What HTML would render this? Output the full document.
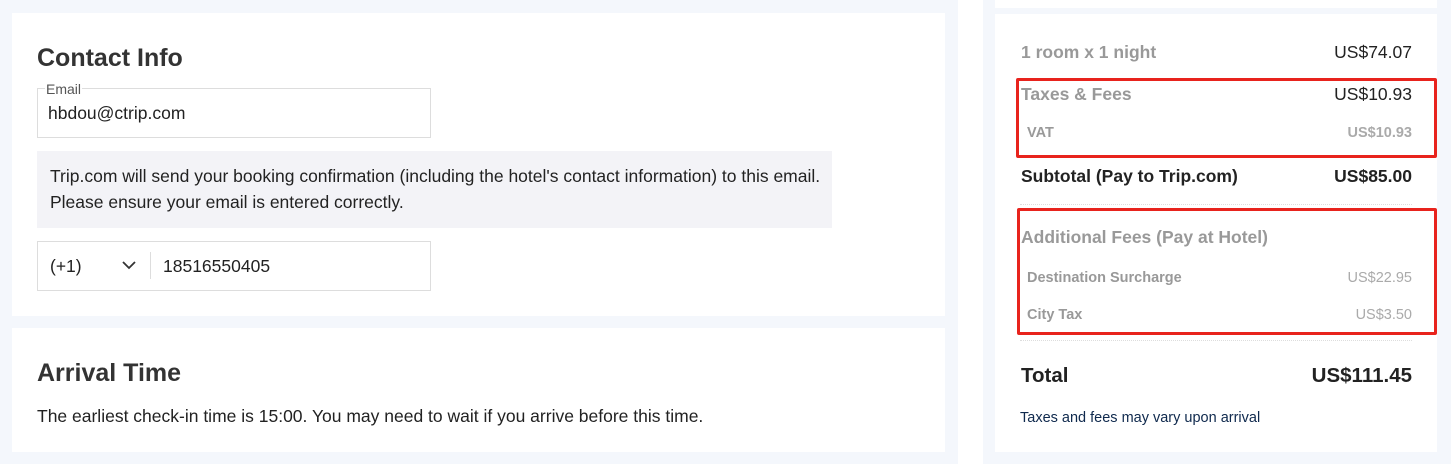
<!DOCTYPE html>
<html><head><style>
*{margin:0;padding:0;box-sizing:border-box}
body{width:1451px;height:464px;background:#f4f7fc;position:relative;overflow:hidden;font-family:"Liberation Sans",Arial,sans-serif;color:#0f294d}
.a{position:absolute}
.card{position:absolute;background:#fff}
h2{position:absolute;font-size:25px;font-weight:bold;color:#333}
.t{position:absolute;white-space:nowrap}
.r{position:absolute;white-space:nowrap;right:39px;text-align:right}
</style></head><body>
<div class="card" style="left:12px;top:13px;width:933px;height:303px"></div>
<div class="card" style="left:12px;top:328px;width:933px;height:124px"></div>
<div class="card" style="left:958px;top:0;width:25px;height:464px"></div>
<div class="card" style="left:995px;top:0;width:442px;height:8px"></div>
<div class="card" style="left:995px;top:14px;width:442px;height:438px"></div>

<h2 style="left:37px;top:44px">Contact Info</h2>
<div class="a" style="left:37px;top:88px;width:394px;height:50px;border:1px solid #ddd"></div>
<div class="t" style="left:45px;top:81px;font-size:14px;color:#555;background:#fff;padding:0 1px;line-height:16px">Email</div>
<div class="t" style="left:48px;top:103px;font-size:17.5px;color:#222">hbdou@ctrip.com</div>
<div class="a" style="left:37px;top:151px;width:795px;height:77px;background:#f3f3f7"></div>
<div class="t" style="left:50px;top:163px;font-size:17.5px;color:#222;line-height:26px">Trip.com will send your booking confirmation (including the hotel's contact information) to this email.<br>Please ensure your email is entered correctly.</div>
<div class="a" style="left:37px;top:241px;width:394px;height:50px;border:1px solid #ddd"></div>
<div class="t" style="left:50px;top:256px;font-size:17.5px;color:#222">(+1)</div>
<svg class="a" style="left:121px;top:259px" width="16" height="12" viewBox="0 0 16 12"><path d="M2 3 L8 9 L14 3" fill="none" stroke="#333" stroke-width="1.8"/></svg>
<div class="a" style="left:150px;top:252px;width:1px;height:27px;background:#ddd"></div>
<div class="t" style="left:163px;top:256px;font-size:17.5px;color:#222">18516550405</div>

<h2 style="left:37px;top:359px">Arrival Time</h2>
<div class="t" style="left:37px;top:406px;font-size:17.5px;color:#222">The earliest check-in time is 15:00. You may need to wait if you arrive before this time.</div>

<div class="t" style="left:1021px;top:42px;font-size:17.5px;font-weight:bold;color:#999">1 room x 1 night</div>
<div class="r" style="top:42px;font-size:17.5px;color:#222">US$74.07</div>
<div class="a" style="left:1016px;top:78px;width:421px;height:80px;border:3px solid #e8231d;border-radius:2px"></div>
<div class="t" style="left:1021px;top:84px;font-size:17.5px;font-weight:bold;color:#999">Taxes &amp; Fees</div>
<div class="r" style="top:84px;font-size:17.5px;color:#222">US$10.93</div>
<div class="t" style="left:1027px;top:125px;font-size:14.5px;font-weight:bold;color:#999">VAT</div>
<div class="r" style="top:125px;font-size:14.5px;font-weight:bold;color:#aaa">US$10.93</div>
<div class="t" style="left:1021px;top:166px;font-size:17.5px;font-weight:bold;color:#222">Subtotal (Pay to Trip.com)</div>
<div class="r" style="top:166px;font-size:17.5px;font-weight:bold;color:#222">US$85.00</div>
<div class="a" style="left:1020px;top:204px;width:392px;border-top:1px dotted #ddd"></div>
<div class="a" style="left:1017px;top:208px;width:420px;height:127px;border:3px solid #e8231d;border-radius:2px"></div>
<div class="t" style="left:1021px;top:227px;font-size:17.5px;font-weight:bold;color:#999">Additional Fees (Pay at Hotel)</div>
<div class="t" style="left:1027px;top:270px;font-size:14.5px;font-weight:bold;color:#999">Destination Surcharge</div>
<div class="r" style="top:270px;font-size:14.5px;color:#aaa">US$22.95</div>
<div class="t" style="left:1027px;top:307px;font-size:14.5px;font-weight:bold;color:#999">City Tax</div>
<div class="r" style="top:307px;font-size:14.5px;color:#aaa">US$3.50</div>
<div class="a" style="left:1020px;top:340px;width:392px;border-top:1px dotted #ddd"></div>
<div class="t" style="left:1021px;top:364px;font-size:20.5px;font-weight:bold;color:#222">Total</div>
<div class="r" style="top:364px;font-size:20.5px;font-weight:bold;color:#222">US$111.45</div>
<div class="t" style="left:1020px;top:410px;font-size:14.5px;color:#0f294d">Taxes and fees may vary upon arrival</div>
</body></html>
